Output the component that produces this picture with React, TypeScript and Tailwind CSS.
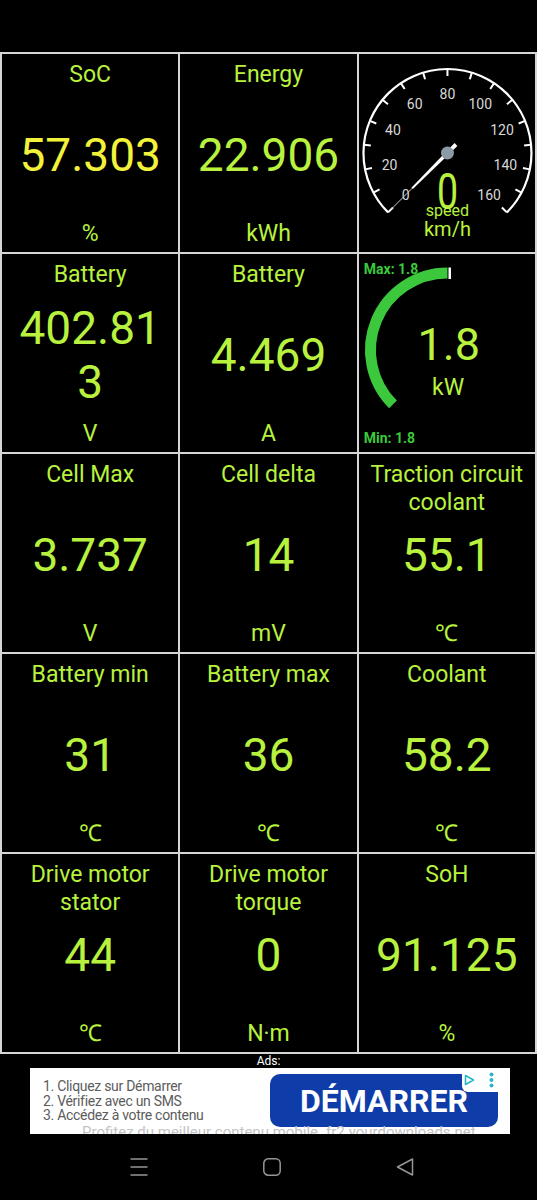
import React from 'react'

type Item = { title: string; value: string; unit: string; yellow?: boolean }

const rad = (d: number) => (d * Math.PI) / 180
// point at radius r along angle a (deg, math orientation), shifted sideways by off
const pt = (cx: number, cy: number, r: number, a: number, off = 0): [number, number] => [
  cx + r * Math.cos(rad(a)) + off * Math.cos(rad(a + 90)),
  cy - r * Math.sin(rad(a)) - off * Math.sin(rad(a + 90)),
]

const Cell = ({ title, value, unit, yellow }: Item) => (
  <div className="bg-black grid grid-rows-[1fr_auto_1fr] px-[4px] pt-[7px] pb-[4px] text-center text-[#b8f23e]">
    <div className="self-start text-[23px] leading-[28px]">{title}</div>
    <div className={`mx-auto max-w-[158px] break-all text-[46px] leading-[54px] ${yellow ? 'text-[#f2f23a]' : ''}`}>
      {value}
    </div>
    <div className="self-end text-[23px] leading-[28px]">{unit}</div>
  </div>
)

const Speedometer = () => {
  const cx = 88.3
  const cy = 99
  const ticks = Array.from({ length: 17 }, (_, i) => 225 - i * 16.875)
  const labels = Array.from({ length: 9 }, (_, i) => ({ v: i * 20, a: 225 - i * 33.75 }))
  const a = 225
  const needle = [pt(cx, cy, -12, a, -2), pt(cx, cy, -12, a, 2), pt(cx, cy, 50, a, 1), pt(cx, cy, 50, a, -1)]
  const [t1x, t1y] = pt(cx, cy, 50, a)
  const [t2x, t2y] = pt(cx, cy, 80, a)
  const s1 = pt(cx, cy, 84, 225)
  const s2 = pt(cx, cy, 84, -45)
  return (
    <div className="bg-black">
      <svg viewBox="0 0 176 198" className="w-full h-full">
        <path d={`M${s1[0]} ${s1[1]} A84 84 0 1 1 ${s2[0]} ${s2[1]}`} fill="none" stroke="#fff" strokeWidth="2.2" />
        {ticks.map((t) => {
          const [x1, y1] = pt(cx, cy, 84, t)
          const [x2, y2] = pt(cx, cy, 77, t)
          return <line key={t} x1={x1} y1={y1} x2={x2} y2={y2} stroke="#fff" strokeWidth="2" />
        })}
        {labels.map((l) => {
          const [x, y] = pt(cx, cy, 59, l.a)
          return (
            <text key={l.v} x={x} y={y} textAnchor="middle" dominantBaseline="central" fontSize="14" fill="#d8d8d8">
              {l.v}
            </text>
          )
        })}
        <line x1={t1x} y1={t1y} x2={t2x} y2={t2y} stroke="#c8c8c8" strokeWidth="1" />
        <polygon points={needle.map((p) => p.join(',')).join(' ')} fill="#fff" />
        <circle cx={cx} cy={cy} r="6.5" fill="#8c9aa6" />
        <text transform={`translate(${cx} 155) scale(0.75 1)`} textAnchor="middle" fontSize="50" fill="#b8f23e">
          0
        </text>
        <text x={cx} y="162" textAnchor="middle" fontSize="16" fill="#b8f23e">
          speed
        </text>
        <text x={cx} y="181.5" textAnchor="middle" fontSize="20" fill="#b8f23e">
          km/h
        </text>
      </svg>
    </div>
  )
}

const PowerGauge = () => {
  const cx = 88.3
  const cy = 96
  const [sx, sy] = pt(cx, cy, 77, 225)
  return (
    <div className="bg-black">
      <svg viewBox="0 0 176 198" className="w-full h-full">
        <path d={`M${sx} ${sy} A77 77 0 0 1 ${cx} 19`} fill="none" stroke="#3cc83c" strokeWidth="11" />
        <rect x="89.3" y="13.5" width="2.5" height="11.5" fill="#fff" />
        <text x="4.6" y="20" fontSize="14" fontWeight="700" fill="#3cc83c">
          Max: 1.8
        </text>
        <text x="4.6" y="189.3" fontSize="14" fontWeight="700" fill="#3cc83c">
          Min: 1.8
        </text>
        <text x="89.6" y="106" textAnchor="middle" fontSize="45" fill="#b8f23e">
          1.8
        </text>
        <text x="89" y="141" textAnchor="middle" fontSize="23" fill="#b8f23e">
          kW
        </text>
      </svg>
    </div>
  )
}

const rows: (Item | 'speed' | 'power')[] = [
  { title: 'SoC', value: '57.303', unit: '%', yellow: true },
  { title: 'Energy', value: '22.906', unit: 'kWh' },
  'speed',
  { title: 'Battery', value: '402.813', unit: 'V' },
  { title: 'Battery', value: '4.469', unit: 'A' },
  'power',
  { title: 'Cell Max', value: '3.737', unit: 'V' },
  { title: 'Cell delta', value: '14', unit: 'mV' },
  { title: 'Traction circuit coolant', value: '55.1', unit: '℃' },
  { title: 'Battery min', value: '31', unit: '℃' },
  { title: 'Battery max', value: '36', unit: '℃' },
  { title: 'Coolant', value: '58.2', unit: '℃' },
  { title: 'Drive motor stator', value: '44', unit: '℃' },
  { title: 'Drive motor torque', value: '0', unit: 'N·m' },
  { title: 'SoH', value: '91.125', unit: '%' },
]

const App = () => {
  return (
    <div className="w-[537px] h-[1200px] bg-black overflow-hidden font-['Roboto',sans-serif]">
      {/* status bar */}
      <div className="h-[52px]" />

      {/* gauge grid */}
      <div className="grid grid-cols-3 grid-rows-[repeat(5,198px)] gap-[2px] p-[2px] bg-[#d6d6d6]">
        {rows.map((r, i) =>
          r === 'speed' ? <Speedometer key={i} /> : r === 'power' ? <PowerGauge key={i} /> : <Cell key={i} {...r} />
        )}
      </div>

      {/* ads */}
      <div className="h-[14px] text-center text-[12px] leading-[14px] text-white">Ads:</div>
      <div className="relative ml-[30px] w-[480px] h-[66px] bg-white overflow-hidden">
        <div className="flex items-start h-[59px]">
          <div className="pl-[13px] pt-[11px] text-[14px] leading-[14.5px] tracking-[-0.3px] text-[#5c5c5c]">
            <div>1. Cliquez sur Démarrer</div>
            <div>2. Vérifiez avec un SMS</div>
            <div>3. Accédez à votre contenu</div>
          </div>
          <div className="ml-auto mr-[12px] mt-[6px] w-[228px] h-[53px] rounded-[10px] bg-[#0e3ca8] flex items-center justify-center text-white text-[32px] font-bold leading-none">
            DÉMARRER
          </div>
        </div>
        <div className="-mt-[3px] flex gap-[8px] pl-[52px] text-[15px] leading-[17px] text-[#c4c4c4] whitespace-nowrap">
          <span>Profitez du meilleur contenu mobile</span>
          <span>fr2.yourdownloads.net</span>
        </div>
        <div className="absolute top-0 left-[432px] w-[40px] h-[24px] bg-white rounded-bl-[6px] flex items-center gap-[14px] pl-[2px]">
          <svg width="11" height="12" viewBox="0 0 11 12">
            <path d="M1.5 1.5 L9.5 6 L1.5 10.5 Z" fill="none" stroke="#2bb5c8" strokeWidth="1.6" strokeLinejoin="round" />
          </svg>
          <svg width="5" height="16" viewBox="0 0 5 16">
            <circle cx="2.5" cy="2.5" r="2" fill="#2bb5c8" />
            <circle cx="2.5" cy="8" r="2" fill="#2bb5c8" />
            <circle cx="2.5" cy="13.5" r="2" fill="#2bb5c8" />
          </svg>
        </div>
      </div>

      {/* navigation bar */}
      <div className="h-[66px] flex items-center justify-center gap-[115px] pl-[6px]">
        <svg width="18" height="18" viewBox="0 0 18 18">
          <path d="M0.5 1 H17.5 M0.5 9 H17.5 M0.5 17 H17.5" stroke="#969696" strokeWidth="1.5" />
        </svg>
        <svg width="18" height="18" viewBox="0 0 18 18">
          <rect x="0.8" y="0.8" width="16.4" height="16.4" rx="4.5" fill="none" stroke="#969696" strokeWidth="1.5" />
        </svg>
        <svg width="18" height="18" viewBox="0 0 18 18">
          <path d="M16.5 1 L1.5 9 L16.5 17 Z" fill="none" stroke="#969696" strokeWidth="1.5" strokeLinejoin="round" />
        </svg>
      </div>
    </div>
  )
}

export default App
